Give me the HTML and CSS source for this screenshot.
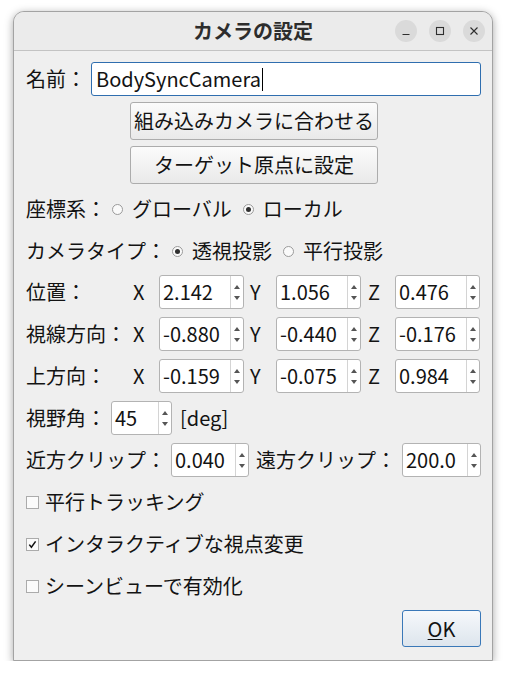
FILE: index.html
```html
<!DOCTYPE html>
<html lang="ja">
<head>
<meta charset="utf-8">
<title>カメラの設定</title>
<link rel="stylesheet" href="styles.css">
</head>
<body>
<div class="window">
  <div class="titlebar">
    <div class="tb-space"></div>
    <div class="title">カメラの設定</div>
    <div class="controls">
      <span class="ctl"><svg width="22" height="22" viewBox="0 0 22 22"><path d="M7.5 14.5h7" stroke="#2e2e2e" stroke-width="1.2" fill="none"/></svg></span>
      <span class="ctl"><svg width="22" height="22" viewBox="0 0 22 22"><rect x="7.5" y="7.5" width="7" height="7" stroke="#2e2e2e" stroke-width="1.1" fill="none"/></svg></span>
      <span class="ctl"><svg width="22" height="22" viewBox="0 0 22 22"><path d="M7.5 7.5l7 7M14.5 7.5l-7 7" stroke="#2e2e2e" stroke-width="1.1" fill="none"/></svg></span>
    </div>
  </div>
  <div class="content">
    <div class="row name-row">
      <span class="lbl w60">名前：</span>
      <div class="lineedit"><span>BodySyncCamera</span><span class="caret"></span></div>
    </div>
    <div class="btn wide first">組み込みカメラに合わせる</div>
    <div class="btn wide">ターゲット原点に設定</div>

    <div class="row radio-row r1">
      <span class="lbl w80">座標系：</span>
      <span class="radio"><span class="ind"></span><span>グローバル</span></span>
      <span class="radio on"><span class="ind"></span><span>ローカル</span></span>
    </div>
    <div class="row radio-row">
      <span class="lbl w140">カメラタイプ：</span>
      <span class="radio on"><span class="ind"></span><span>透視投影</span></span>
      <span class="radio"><span class="ind"></span><span>平行投影</span></span>
    </div>

    <div class="vec-row">
      <span class="lbl">位置：</span>
      <span class="axis ax">X</span>
      <div class="spin"><span class="val">2.142</span><span class="arrows"><svg width="12" height="32" viewBox="0 0 12 32"><path d="M3 13L6 9L9 13Z" fill="#555"/><path d="M3 20L6 24L9 20Z" fill="#555"/></svg></span></div>
      <span class="axis ay">Y</span>
      <div class="spin"><span class="val">1.056</span><span class="arrows"><svg width="12" height="32" viewBox="0 0 12 32"><path d="M3 13L6 9L9 13Z" fill="#555"/><path d="M3 20L6 24L9 20Z" fill="#555"/></svg></span></div>
      <span class="axis az">Z</span>
      <div class="spin"><span class="val">0.476</span><span class="arrows"><svg width="12" height="32" viewBox="0 0 12 32"><path d="M3 13L6 9L9 13Z" fill="#555"/><path d="M3 20L6 24L9 20Z" fill="#555"/></svg></span></div>
    </div>
    <div class="vec-row">
      <span class="lbl">視線方向：</span>
      <span class="axis ax">X</span>
      <div class="spin"><span class="val">-0.880</span><span class="arrows"><svg width="12" height="32" viewBox="0 0 12 32"><path d="M3 13L6 9L9 13Z" fill="#555"/><path d="M3 20L6 24L9 20Z" fill="#555"/></svg></span></div>
      <span class="axis ay">Y</span>
      <div class="spin"><span class="val">-0.440</span><span class="arrows"><svg width="12" height="32" viewBox="0 0 12 32"><path d="M3 13L6 9L9 13Z" fill="#555"/><path d="M3 20L6 24L9 20Z" fill="#555"/></svg></span></div>
      <span class="axis az">Z</span>
      <div class="spin"><span class="val">-0.176</span><span class="arrows"><svg width="12" height="32" viewBox="0 0 12 32"><path d="M3 13L6 9L9 13Z" fill="#555"/><path d="M3 20L6 24L9 20Z" fill="#555"/></svg></span></div>
    </div>
    <div class="vec-row">
      <span class="lbl">上方向：</span>
      <span class="axis ax">X</span>
      <div class="spin"><span class="val">-0.159</span><span class="arrows"><svg width="12" height="32" viewBox="0 0 12 32"><path d="M3 13L6 9L9 13Z" fill="#555"/><path d="M3 20L6 24L9 20Z" fill="#555"/></svg></span></div>
      <span class="axis ay">Y</span>
      <div class="spin"><span class="val">-0.075</span><span class="arrows"><svg width="12" height="32" viewBox="0 0 12 32"><path d="M3 13L6 9L9 13Z" fill="#555"/><path d="M3 20L6 24L9 20Z" fill="#555"/></svg></span></div>
      <span class="axis az">Z</span>
      <div class="spin"><span class="val">0.984</span><span class="arrows"><svg width="12" height="32" viewBox="0 0 12 32"><path d="M3 13L6 9L9 13Z" fill="#555"/><path d="M3 20L6 24L9 20Z" fill="#555"/></svg></span></div>
    </div>

    <div class="row">
      <span class="lbl w80">視野角：</span>
      <div class="spin fov"><span class="val">45</span><span class="arrows"><svg width="12" height="32" viewBox="0 0 12 32"><path d="M3 13L6 9L9 13Z" fill="#555"/><path d="M3 20L6 24L9 20Z" fill="#555"/></svg></span></div>
      <span class="unit">[deg]</span>
    </div>
    <div class="row">
      <span class="lbl w140">近方クリップ：</span>
      <div class="spin clip"><span class="val">0.040</span><span class="arrows"><svg width="12" height="32" viewBox="0 0 12 32"><path d="M3 13L6 9L9 13Z" fill="#555"/><path d="M3 20L6 24L9 20Z" fill="#555"/></svg></span></div>
      <span class="lbl w140 far">遠方クリップ：</span>
      <div class="spin clip far-spin"><span class="val">200.0</span><span class="arrows"><svg width="12" height="32" viewBox="0 0 12 32"><path d="M3 13L6 9L9 13Z" fill="#555"/><path d="M3 20L6 24L9 20Z" fill="#555"/></svg></span></div>
    </div>

    <div class="row check"><span class="box"></span><span>平行トラッキング</span></div>
    <div class="row check"><span class="box"><svg width="11" height="11" viewBox="0 0 11 11"><path d="M2.3 5.6L4.4 8.3L8.6 2.4" stroke="#111" stroke-width="1.5" fill="none"/></svg></span><span>インタラクティブな視点変更</span></div>
    <div class="row check"><span class="box"></span><span>シーンビューで有効化</span></div>

    <div class="footer">
      <div class="btn ok"><span><u>O</u>K</span></div>
    </div>
  </div>
</div>
</body>
</html>
```

FILE: styles.css
```css
* { box-sizing: border-box; }

html, body {
  margin: 0;
  padding: 0;
  background: #ffffff;
}

body {
  font-family: "Noto Sans CJK JP", "Noto Sans", sans-serif;
  font-size: 20px;
  line-height: 1.2;
  color: #131313;
}

.window {
  margin: 11px 0 0 13px;
  width: 480px;
  height: 650px;
  border: 1px solid #a3a3a3;
  border-radius: 11px 11px 0 0;
  background: #efefef;
  box-shadow: 0 2px 9px rgba(0, 0, 0, 0.35);
  overflow: hidden;
  display: flex;
  flex-direction: column;
}

.titlebar {
  height: 39px;
  flex: none;
  background: #ebebeb;
  border-bottom: 1px solid #c3c3c3;
  display: grid;
  grid-template-columns: 1fr auto 1fr;
  align-items: center;
}

.title {
  font-weight: bold;
  font-size: 20px;
  color: #2d2d2d;
  padding-bottom: 1px;
}

.controls {
  justify-self: end;
  display: flex;
  gap: 12px;
  padding-right: 7px;
}

.ctl {
  width: 22px;
  height: 22px;
  border-radius: 50%;
  background: #dadada;
  display: block;
}
.ctl svg { display: block; }

.content {
  flex: 1;
  display: flex;
  flex-direction: column;
  padding: 11px 11px 0 12px;
}

.row {
  display: flex;
  align-items: center;
  height: 34px;
  margin-top: 8px;
  white-space: nowrap;
}

.name-row { margin-top: 0; }

.lbl { flex: none; white-space: nowrap; }
.w60 { width: 60px; }
.w80 { width: 80px; }
.w140 { width: 140px; }

.lineedit {
  flex: 1;
  height: 34px;
  margin-left: 5px;
  background: #ffffff;
  border: 1px solid #2f6eaf;
  border-radius: 3px;
  padding-left: 4px;
  display: flex;
  align-items: center;
  font-size: 20px;
}

.caret {
  display: inline-block;
  width: 1px;
  height: 23px;
  background: #000;
  margin-left: 1px;
}

.btn {
  display: flex;
  align-items: center;
  justify-content: center;
  height: 38px;
  border: 1px solid #acacac;
  border-radius: 3px;
  background: linear-gradient(#fbfbfb, #e9e9e9);
  white-space: nowrap;
}

.wide {
  width: 248px;
  margin: 6px auto 0 auto;
  padding-left: 1px;
}

.radio-row.r1 { margin-top: 7px; }
.radio-row { padding-top: 2px; }

.radio {
  display: flex;
  align-items: center;
  margin-left: 11px;
}
.radio-row .lbl + .radio { margin-left: 6px; }

.ind {
  width: 11px;
  height: 11px;
  border-radius: 50%;
  border: 1px solid #9a9a9a;
  background: #fafafa;
  margin-right: 9px;
  margin-top: 1px;
  display: flex;
  align-items: center;
  justify-content: center;
}
.radio.on .ind::after {
  content: "";
  width: 5px;
  height: 5px;
  border-radius: 50%;
  background: #303030;
}

.vec-row {
  display: grid;
  grid-template-columns: 107px 26px 85px 32px 85px 34px 85px;
  align-items: center;
  height: 34px;
  margin-top: 8px;
  white-space: nowrap;
}

.axis { display: block; }
.ay { padding-left: 6px; }
.az { padding-left: 7px; }

.spin {
  height: 34px;
  background: #ffffff;
  border: 1px solid #b3b3b3;
  border-radius: 3px;
  display: flex;
  align-items: stretch;
  overflow: hidden;
}

.val {
  flex: 1;
  padding-left: 3px;
  display: flex;
  align-items: center;
}

.arrows {
  width: 13px;
  flex: none;
  border-left: 1px solid #d4d4d4;
  display: flex;
  align-items: center;
  justify-content: center;
}
.arrows svg { display: block; }

.fov { width: 61px; margin-left: 5px; }
.unit { margin-left: 8px; }

.clip { width: 78px; margin-left: 5px; }
.far { margin-left: 7px; }
.far-spin { width: 79px; margin-left: 6px; }

.check .box {
  width: 13px;
  height: 13px;
  flex: none;
  border: 1px solid #ababab;
  background: #fbfbfb;
  margin-right: 6px;
  margin-top: 1px;
  display: flex;
  align-items: center;
  justify-content: center;
}
.check .box svg { display: block; }

.footer {
  display: flex;
  justify-content: flex-end;
  margin-top: 7px;
}

.ok {
  width: 79px;
  height: 37px;
  border-color: #3a78b8;
  background: linear-gradient(#f6f8fb, #dde5ed);
}
.ok u { text-decoration-thickness: 1px; text-underline-offset: 2px; }
```
